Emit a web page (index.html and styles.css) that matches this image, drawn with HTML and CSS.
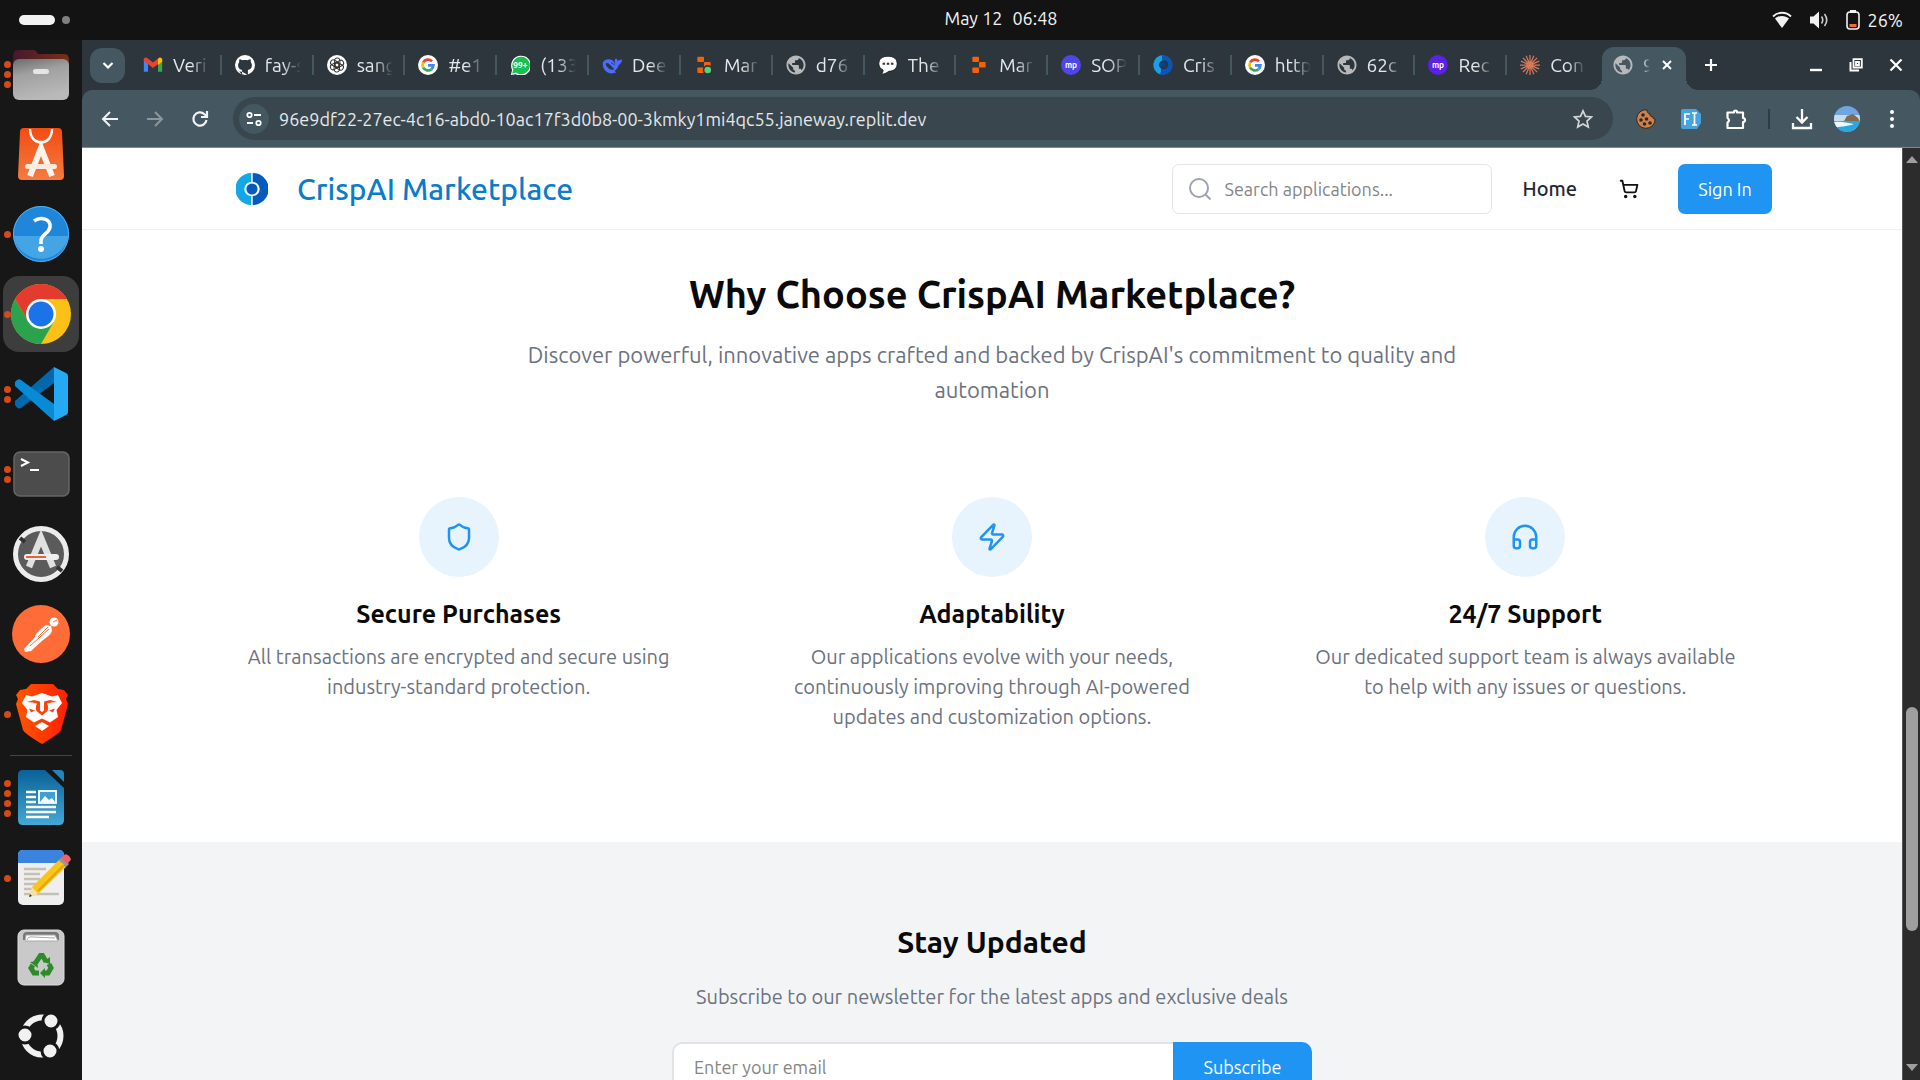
FILE: index.html
```html
<!DOCTYPE html>
<html lang="en">
<head>
<meta charset="utf-8">
<meta name="viewport" content="width=device-width, initial-scale=1">
<title>CrispAI Marketplace</title>
<link rel="stylesheet" href="styles.css">
</head>
<body>
<svg class="sprite" aria-hidden="true">
  <symbol id="google" viewBox="0 0 24 24"><circle cx="12" cy="12" r="12" fill="#fff"/><g fill="none" stroke-width="3.2"><path d="M16.8 7.6A6.6 6.6 0 0 0 6.2 8.8" stroke="#ea4335"/><path d="M6.2 8.8a6.6 6.6 0 0 0 0 6.4" stroke="#fbbc05"/><path d="M6.2 15.2a6.6 6.6 0 0 0 10 1.8" stroke="#34a853"/><path d="M16.2 17a6.6 6.6 0 0 0 2.3-4.6H12" stroke="#4285f4"/></g></symbol>
  <symbol id="globe" viewBox="1.500 1.500 21 21"><path d="M12 2C6.480 2 2 6.480 2 12s4.480 10 10 10 10-4.480 10-10S17.520 2 12 2zm-1 17.930c-3.950-.490-7-3.850-7-7.930 0-.620.080-1.210.210-1.790L9 15v1c0 1.100.900 2 2 2v1.930zm6.900-2.540c-.260-.810-1-1.390-1.900-1.390h-1v-3c0-.550-.450-1-1-1H8v-2h2c.550 0 1-.450 1-1V7h2c1.100 0 2-.900 2-2v-.410c2.930 1.190 5 4.060 5 7.410 0 2.080-.800 3.970-2.100 5.390z" fill="#b6b8ba"/></symbol>
  <symbol id="replit" viewBox="0 0 24 24"><g fill="#f26207"><rect x="4" y="2" width="8" height="6.500" rx="1"/><rect x="12" y="8.500" width="8" height="6.500" rx="1"/><rect x="4" y="15" width="8" height="6.500" rx="1"/></g></symbol>
  <symbol id="crisp" viewBox="0 0 32 32"><path d="M15.300 0A16 16 0 0 0 15.300 32V23A7 7 0 0 1 15.300 9Z" fill="#12a8e6"/><path d="M16.700 0A16 16 0 0 1 16.700 32V23A7 7 0 0 0 16.700 9Z" fill="#055bbd"/><circle cx="16" cy="16" r="5.600" fill="#055bbd"/></symbol>
</svg>

<header class="topbar">
  <button class="workspaces" aria-label="Activities"><span class="pill"></span><span class="dot"></span></button>
  <time class="clock"><span>May 12</span><span>06:48</span></time>
  <button class="status" aria-label="System menu">
    <svg width="20" height="18" viewBox="0 0 20 18"><path d="M1 5.500C6 .5 14 .5 19 5.500" fill="none" stroke="#f2f2f2" stroke-width="1.800"/><path d="M3 7.600C7 4 13 4 17 7.600L10 17Z" fill="#f2f2f2"/></svg>
    <svg width="20" height="20" viewBox="0 0 20 20"><path d="M1 6.500h3.500L10 1.500v17L4.500 13.500H1Z" fill="#f2f2f2"/><path d="M12.500 6.500q2.500 3.500 0 7M15.500 4q4.500 6 0 12" fill="none" stroke="#ccc" stroke-width="1.600"/></svg>
    <span class="battery"><svg width="14" height="20" viewBox="0 0 14 20"><rect x="4" y="0" width="6" height="3" fill="#f2f2f2"/><rect x="1" y="2" width="12" height="17" rx="3" fill="none" stroke="#f2f2f2" stroke-width="1.600"/><rect x="3.500" y="14" width="7" height="3" fill="#f26a3c"/></svg>26%</span>
  </button>
</header>

<div class="desktop">
<nav class="dock" aria-label="Dock">
  <button class="app" aria-label="Files"><span class="running"><i></i><i></i><i></i></span>
    <svg width="60" height="60" viewBox="0 0 60 60"><defs><linearGradient id="fg" x1="0" y1="0" x2=".3" y2="1"><stop offset="0" stop-color="#6b6b6b"/><stop offset=".4" stop-color="#a0a0a0"/><stop offset="1" stop-color="#b9b9b9"/></linearGradient><linearGradient id="fb"><stop offset="0" stop-color="#45182f"/><stop offset="1" stop-color="#7a2f17"/></linearGradient></defs><path d="M2 12q0-6 5-6h15q3 0 5 4h26q5 0 5 6v12H2Z" fill="url(#fb)"/><rect x="2" y="15" width="56" height="41" rx="6" fill="url(#fg)"/><rect x="22" y="25" width="16" height="5" rx="2.500" fill="#e5e5e5"/></svg></button>
  <button class="app" aria-label="App Center">
    <svg width="60" height="60" viewBox="0 0 60 60"><defs><linearGradient id="bag" x2="0" y2="1"><stop offset="0" stop-color="#f24c12"/><stop offset="1" stop-color="#f47c40"/></linearGradient></defs><path d="M13 4h34q4 0 4 4l2 44q0 4-4 4H11q-4 0-4-4L9 8q0-4 4-4Z" fill="url(#bag)"/><path d="M19 5c0 18 22 18 22 0" fill="none" stroke="#fff" stroke-width="2.400"/><path d="M19 52 30 24 41 52" fill="none" stroke="#fff3ec" stroke-width="6"/><rect x="14" y="40" width="32" height="5" rx="2.500" fill="#ffe9dc"/></svg></button>
  <button class="app" aria-label="Help"><span class="running"><i></i></span>
    <svg width="60" height="60" viewBox="0 0 60 60"><circle cx="30" cy="30" r="28" fill="#1f86d9"/><path d="M2.500 32h55a28 28 0 0 1-55 0Z" fill="#43a5e5"/><circle cx="30" cy="30" r="27.500" fill="none" stroke="#4fb0ef"/><path d="M23 17c7-5 17-2 16 6-1 7-9 7-9 14v3" fill="none" stroke="#fff" stroke-width="3.600"/><circle cx="30" cy="45" r="3" fill="#fff"/></svg></button>
  <button class="app active" aria-label="Google Chrome"><span class="running"><i></i></span>
    <svg width="62" height="62" viewBox="0 0 62 62"><circle cx="31" cy="31" r="30" fill="#fbc116"/><path d="M5 16A30 30 0 0 1 57 16H31L18 38.500Z" fill="#e33b2e"/><path d="M5 16 18 38.500 31 46 44 38.500 31 61A30 30 0 0 1 5 16Z" fill="#2ba24c"/><path d="M31 16H57L44 38.500Z" fill="#fbc116"/><circle cx="31" cy="31" r="15" fill="#fff"/><circle cx="31" cy="31" r="12.500" fill="#1a73e8"/></svg></button>
  <button class="app" aria-label="Visual Studio Code"><span class="running"><i></i><i></i></span>
    <svg width="60" height="60" viewBox="0 0 60 60"><path d="M4 37 43 3V19L10 44Q7 46 4 41Z" fill="#0069ac"/><path d="M4 18Q7 14 10 16L43 40V57L4 22Z" fill="#078bd6"/><path d="M43 3 55 9Q57 10 57 12V48Q57 50 55 51L43 57Z" fill="#25a9f2"/></svg></button>
  <button class="app" aria-label="Terminal"><span class="running"><i></i><i></i></span>
    <svg width="60" height="60" viewBox="0 0 60 60"><rect x="3" y="8" width="55" height="44" rx="6" fill="#4c4c4c" stroke="#666" stroke-width="1.500"/><path d="M10 15l7 3.500-7 3.500M19 26h9" fill="none" stroke="#fff" stroke-width="2"/></svg></button>
  <button class="app" aria-label="Software Updater">
    <svg width="60" height="60" viewBox="0 0 60 60"><circle cx="30" cy="30" r="27" fill="#5b5b5b"/><circle cx="30" cy="30" r="25.500" fill="none" stroke="#ececec" stroke-width="5"/><path d="M9 14l5 4M46 43l5 4" stroke="#333" stroke-width="4"/><path d="M18 43 30 14 42 43" fill="none" stroke="#e0e0e0" stroke-width="6.500"/><rect x="13" y="30" width="35" height="6" rx="3" fill="#eee"/><path d="M15 33h20" stroke="#e6643a" stroke-width="2"/></svg></button>
  <button class="app" aria-label="Postman">
    <svg width="60" height="60" viewBox="0 0 60 60"><circle cx="30" cy="30" r="29" fill="#ff6c37"/><circle cx="43" cy="18" r="4.500" fill="#fff"/><path d="M40 22l-5-1c-6 4-11 9-11 12L13 45l1 3 6-1 12-11c5-3 9-7 9-10Z" fill="#fff"/><path d="M19 42l19-17M27 33l10-10M42 18l4-2" stroke="#ff6c37" stroke-width="1"/></svg></button>
  <button class="app" aria-label="Brave"><span class="running"><i></i></span>
    <svg width="60" height="60" viewBox="0 0 60 60"><defs><linearGradient id="br"><stop offset="0" stop-color="#ff5601"/><stop offset="1" stop-color="#ff2000"/></linearGradient></defs><path d="M20 0H42L47 5 53 6 57 11 55 15 57 20 50 46Q48 50 31 60 14 50 12 46L5 20 7 15 5 11 9 6 15 5Z" fill="url(#br)"/><path d="M11 19 15 11 21 12.500 31 9 41 12.500 47 11 51 19 45.500 26 47 33 39 38.500 31 34.500 23 38.500 15 33 16.500 26Z" fill="#fff"/><path d="M16 18q6 0 10 1.500-2 4-.5 7.500L31 31.500 36.500 27q1.500-3.500-.5-7.500 4-1.500 10-1.500l-7-2-6 1.500v9L31 28l-2-1.500v-9L23 16Z" fill="#fb4310"/><path d="M18 24.500l6 2-4 2ZM44 24.500l-6 2 4 2Z" fill="#fb4310"/><path d="M24 42 31 38 38 42 31 47Z" fill="#fff"/></svg></button>
  <hr class="dock-line">
  <button class="app" aria-label="LibreOffice Writer"><span class="running"><i></i><i></i><i></i><i></i></span>
    <svg width="60" height="60" viewBox="0 0 60 60"><defs><linearGradient id="wr" x2="0" y2="1"><stop offset="0" stop-color="#0a6197"/><stop offset="1" stop-color="#43a9d6"/></linearGradient></defs><path d="M12 2H34L53 20V52q0 5-5 5H12q-5 0-5-5V7q0-5 5-5Z" fill="url(#wr)"/><path d="M41 2h8q4 0 4 4v8Z" fill="#2186bd"/><path d="M15 24h10M15 29h10M15 34h10M15 39h30M15 44h30M15 49h23" stroke="#fff" stroke-width="2.400"/><rect x="28" y="23" width="17" height="12" fill="#3f9fd0" stroke="#fff" stroke-width="1.800"/><path d="M29 34l5-6 4 4 3-2 3 4Z" fill="#fff"/></svg></button>
  <button class="app" aria-label="Text Editor"><span class="running"><i></i></span>
    <svg width="60" height="60" viewBox="0 0 60 60"><rect x="7" y="2" width="46" height="55" rx="5" fill="#efefef"/><path d="M7 15V7q0-5 5-5h36q5 0 5 5v8Z" fill="#3a84e0"/><path d="M13 21h22M13 26h16M13 31h16M13 36h16M13 41h12M13 46h35" stroke="#c5c0b4" stroke-width="2.400"/><path d="M18 49l3-10L48 12l7 7-28 27Z" fill="#f9c51b"/><path d="M21 39l6 7-9 3Z" fill="#f7e0a8"/><path d="M18 49l1-3 2 2Z" fill="#333"/><path d="M48 12l3-3 7 7-3 3Z" fill="#999"/><path d="M50 10l3-3q2-2 5 1t1 5l-3 3Z" fill="#f0606a"/><path d="M27 43 53 17" stroke="#e0a40c" stroke-width="2"/></svg></button>
  <button class="app" aria-label="Trash">
    <svg width="60" height="60" viewBox="0 0 60 60"><rect x="7" y="2" width="46" height="55" rx="6" fill="#c9c9c9" stroke="#ddd"/><path d="M12 12V8q0-4 4-4h28q4 0 4 4v4Z" fill="#777"/><path d="M14 13l1-6h29l3 6Z" fill="#fff" stroke="#aaa"/><path d="M16 12q1-4 6-3l22 1" fill="none" stroke="#aaa"/><g fill="none" stroke="#2f8b2a" stroke-width="5"><path d="M24.500 35l5-7.500h2l3.500 6"/><path d="M38 36l2 4-3 5h-5"/><path d="M28 45h-5l-3-5 2-3"/></g><path d="M39 29v7l-7-2ZM34 40v10l-5-5ZM19 34l7-1 1 7Z" fill="#2f8b2a"/></svg></button>
  <button class="app" aria-label="Show Apps">
    <svg width="60" height="60" viewBox="0 0 60 60"><circle cx="31" cy="28" r="18.500" fill="none" stroke="#f1f1f1" stroke-width="6"/><g fill="#f1f1f1" stroke="#171717" stroke-width="3"><circle cx="14" cy="27" r="8"/><circle cx="40" cy="13" r="8"/><circle cx="39" cy="43" r="8"/></g></svg></button>
</nav>

<div class="browser">
  <div class="tabstrip">
    <button class="tab-search" aria-label="Search tabs"><svg width="14" height="14" viewBox="0 0 14 14"><path d="M2.500 5 7 9.500 11.500 5" fill="none" stroke="#fff" stroke-width="2.200"/></svg></button>
    <div class="tabs">
      <button class="tab"><svg viewBox="0 0 24 24"><path d="M1 4.500V20H6V10Z" fill="#4285f4"/><path d="M18 10V20h5V4.500Z" fill="#34a853"/><path d="M1 7V4.500Q3 2 5.500 4L12 9l6.500-5Q21 2.500 23 4.500V7L12 15.500Z" fill="#ea4335"/><path d="M18 4.500 20 3q3 0 3 3v2l-5 4Z" fill="#fbbc04"/></svg><span>Veri</span></button>
      <button class="tab"><svg viewBox="0 0 24 24"><circle cx="12" cy="12" r="12" fill="#fff"/><path d="M8.500 24v-4c-3 .7-4-1-4.600-2M8.500 20v-2c-4-.8-5-3.400-4.700-6.500.1-1.200.6-2.200 1.300-3-.3-1.200-.2-2.400.2-3.500 1.300 0 2.400.6 3.500 1.400 2-.5 4.400-.5 6.400 0 1.100-.8 2.200-1.400 3.500-1.400.4 1.100.5 2.300.2 3.500.7.800 1.200 1.800 1.300 3 .3 3.100-.7 5.700-4.700 6.500v6Z" fill="#2c363c"/></svg><span>fay-s</span></button>
      <button class="tab"><svg viewBox="0 0 24 24"><circle cx="12" cy="12" r="12" fill="#fff"/><g fill="none" stroke="#333" stroke-width="1.200"><rect x="9" y="3.500" width="6.500" height="11" rx="3.200"/><rect x="9" y="3.500" width="6.500" height="11" rx="3.200" transform="rotate(60 12 12)"/><rect x="9" y="3.500" width="6.500" height="11" rx="3.200" transform="rotate(120 12 12)"/><rect x="9" y="3.500" width="6.500" height="11" rx="3.200" transform="rotate(180 12 12)"/><rect x="9" y="3.500" width="6.500" height="11" rx="3.200" transform="rotate(240 12 12)"/><rect x="9" y="3.500" width="6.500" height="11" rx="3.200" transform="rotate(300 12 12)"/></g></svg><span>sang</span></button>
      <button class="tab"><svg><use href="#google"/></svg><span>#e1</span></button>
      <button class="tab"><svg viewBox="0 0 24 24"><path d="M1 24l1.500-6A12 12 0 1 1 7 23Z" fill="#fff"/><path d="M2.500 22.500 4 17.500A10.500 10.500 0 1 1 7 21Z" fill="#16c14d"/><text x="12.500" y="16" text-anchor="middle" class="mini">99+</text></svg><span>(133</span></button>
      <button class="tab"><svg viewBox="0 0 24 24"><path d="M1 9C3 5 8 4 12 6c2 2 3 3 4 5l-1-5 2-2 2 3 5-2c0 4-2 6-4 7-1 4-3 6-5 7l2 2-4 1C6 23 0 17 1 9Z" fill="#4d6bfe"/><path d="M5 10c4 0 6 4 9 7-4 1-9-2-9-7ZM11 9l4 3" fill="#2c363c" stroke="#2c363c"/></svg><span>Dee</span></button>
      <button class="tab"><svg viewBox="0 0 24 24"><use href="#replit"/><circle cx="16.500" cy="18" r="6" fill="#2c363c"/><circle cx="16.500" cy="18" r="4" fill="#58d27a"/></svg><span>Mar</span></button>
      <button class="tab"><svg><use href="#globe"/></svg><span>d76</span></button>
      <button class="tab"><svg viewBox="0 0 24 24"><path d="M12 1.500c7 0 11 3.500 11 9s-4 9-10 9c-3 2.500-6 3.500-9 3.500 2-2 2-3 2-5-3-1.500-5-4-5-7.500 0-5.500 4-9 11-9Z" fill="#fff" stroke="#15191c"/><path d="M5.500 10.500h3M10.500 10.500h3M15.500 10.500h3" stroke="#333" stroke-width="2.400"/></svg><span>The</span></button>
      <button class="tab"><svg><use href="#replit"/></svg><span>Mar</span></button>
      <button class="tab"><svg viewBox="0 0 24 24"><circle cx="12" cy="12" r="12" fill="#4f46e5"/><text x="12" y="15" text-anchor="middle" class="mini">mp</text></svg><span>SOP</span></button>
      <button class="tab"><svg viewBox="0 0 24 24"><path d="M12 0a12 12 0 0 0-3 23.500l1-7a5.500 5.500 0 0 1 1-10Z" fill="#1a9fe8"/><path d="M11 0a12 12 0 1 1-2 23.700l1.500-7A5.500 5.500 0 1 0 11 6.500Z" fill="#0a55b5"/><circle cx="12" cy="12" r="3.500" fill="#0c3f80"/></svg><span>Cris</span></button>
      <button class="tab"><svg><use href="#google"/></svg><span>http</span></button>
      <button class="tab"><svg><use href="#globe"/></svg><span>62c</span></button>
      <button class="tab"><svg viewBox="0 0 24 24"><circle cx="12" cy="12" r="12" fill="#5b21e6"/><text x="12" y="15" text-anchor="middle" class="mini">mp</text></svg><span>Rec</span></button>
      <button class="tab"><svg viewBox="0 0 24 24"><path d="M12 0v24M0 12h24M3.500 3.500l17 17M20.500 3.500l-17 17M7.400 1l9.200 22M16.600 1 7.400 23M1 7.400l22 9.200M1 16.600l22-9.200" stroke="#d97757" stroke-width="1.500"/></svg><span>Con</span></button>
    </div>
    <div class="tab-current"><svg width="20" height="20"><use href="#globe"/></svg><span>9</span><button aria-label="Close tab"><svg width="12" height="12" viewBox="0 0 12 12"><path d="M2 2l8 8M10 2l-8 8" stroke="#fff" stroke-width="2"/></svg></button></div>
    <button class="new-tab" aria-label="New tab"><svg width="14" height="14" viewBox="0 0 14 14"><path d="M7 1v12M1 7h12" stroke="#fff" stroke-width="2.200"/></svg></button>
    <div class="window-buttons">
      <button aria-label="Minimize"><svg width="14" height="14" viewBox="0 0 14 14"><path d="M1 12h12" stroke="#fff" stroke-width="2.400"/></svg></button>
      <button aria-label="Restore"><svg width="14" height="14" viewBox="0 0 14 14"><path d="M4.500 1.200h8.300v8.300H4.500ZM7 4h3v3H7Z" fill="none" stroke="#fff" stroke-width="1.800"/><path d="M1.500 4v8.600H10" fill="none" stroke="#fff" stroke-width="2"/></svg></button>
      <button aria-label="Close"><svg width="14" height="14" viewBox="0 0 14 14"><path d="M1.500 1.500l11 11M12.500 1.500l-11 11" stroke="#fff" stroke-width="2.200"/></svg></button>
    </div>
  </div>

  <div class="toolbar">
    <div class="nav-buttons">
      <button aria-label="Back"><svg width="20" height="20" viewBox="0 0 20 20"><path d="M18 10H3M10 3l-7 7 7 7" fill="none" stroke="#f1f3f4" stroke-width="2"/></svg></button>
      <button aria-label="Forward" disabled><svg width="20" height="20" viewBox="0 0 20 20"><path d="M2 10h15M10 3l7 7-7 7" fill="none" stroke="#8b979d" stroke-width="2"/></svg></button>
      <button aria-label="Reload"><svg width="20" height="20" viewBox="0 0 20 20"><path d="M16.500 11A6.600 6.600 0 1 1 14.500 5.200L17 7.500" fill="none" stroke="#f1f3f4" stroke-width="2.200"/><path d="M17 2v6h-6" fill="none" stroke="#f1f3f4" stroke-width="2.200"/></svg></button>
    </div>
    <div class="omnibox">
      <button class="site-info" aria-label="Site information"><svg width="16" height="16" viewBox="0 0 16 16"><g fill="none" stroke="#fff" stroke-width="1.800"><circle cx="3.500" cy="4" r="2.200"/><path d="M8 4h7M1 12h6"/><circle cx="12.500" cy="12" r="2.200"/></g></svg></button>
      <input type="text" aria-label="Address" value="96e9df22-27ec-4c16-abd0-10ac17f3d0b8-00-3kmky1mi4qc55.janeway.replit.dev">
      <button aria-label="Bookmark this page"><svg width="20" height="20" viewBox="0 0 20 20"><path d="M10 1.800l2.500 5.600 6 .6-4.500 4.100 1.300 6L10 15l-5.300 3.100 1.300-6L1.500 8l6-.6Z" fill="none" stroke="#d0d5d8" stroke-width="1.700"/></svg></button>
    </div>
    <div class="extensions">
      <button aria-label="Cookie editor"><svg width="20" height="20" viewBox="0 0 20 20"><path d="M11 .8A9.300 9.300 0 1 0 19.200 10c-2 0-2.700-1-2.500-2.500-2 .3-3-.8-2.600-2.600C12 5 11 3 11 .8Z" fill="#c68452" stroke="#3c2415"/><g fill="#3c2415"><circle cx="7" cy="6" r="1.800"/><circle cx="5" cy="11" r="1.800"/><circle cx="10.500" cy="10" r="1.800"/><circle cx="8.500" cy="15" r="1.800"/><circle cx="14" cy="14" r="1.800"/></g></svg></button>
      <button aria-label="Font inspector"><svg width="20" height="20" viewBox="0 0 20 20"><path d="M2 0h13l5 5v9l-4 6H2q-2 0-2-2V2q0-2 2-2Z" fill="#45a3e0"/><path d="M4 16V5h5M4 10h4M11 4h5M11 16h5M13.500 4v12" fill="none" stroke="#fff" stroke-width="1.700"/></svg></button>
      <button aria-label="Extensions"><svg width="22" height="22" viewBox="0 0 22 22"><path d="M2.500 4.500H9V4a1.500 1.500 0 0 1 3 0v.5h6V10a1.500 1.500 0 0 1 0 4v6H2.500v-5.500q3-2 0-4.500Z" fill="none" stroke="#fff" stroke-width="2.200" stroke-linejoin="round"/></svg></button>
      <span class="bar"></span>
      <button aria-label="Downloads"><svg width="22" height="22" viewBox="0 0 22 22"><path d="M11 1v13M5.500 9l5.500 5.500L16.500 9M2 15v5h18v-5" fill="none" stroke="#fff" stroke-width="2.300"/></svg></button>
      <button aria-label="Profile"><svg width="26" height="26" viewBox="0 0 26 26"><defs><clipPath id="av"><circle cx="13" cy="13" r="13"/></clipPath></defs><g clip-path="url(#av)"><path d="M0 0h26v26H0Z" fill="#6fa5e2"/><path d="M0 9h26v6H0Z" fill="#c8ddec"/><path d="M10 15l3-5 6-2 5 4 2 4Z" fill="#806a50"/><path d="M0 15h26v11H0Z" fill="#2aa7dd"/><path d="M0 16c8-1 12 1 20 2-8 3-14 2-20 4Z" fill="#eef8fb"/></g></svg></button>
      <button aria-label="Menu"><svg width="20" height="20" viewBox="0 0 20 20"><g fill="#fff"><circle cx="10" cy="3" r="2"/><circle cx="10" cy="10" r="2"/><circle cx="10" cy="17" r="2"/></g></svg></button>
    </div>
  </div>

  <div class="viewport">
    <div class="page">
      <header class="site-header">
        <div class="container header-row">
          <a class="brand" href="#"><svg width="32" height="32"><use href="#crisp"/></svg>CrispAI Marketplace</a>
          <nav class="site-nav">
            <label class="search"><svg width="24" height="24" viewBox="0 0 24 24"><circle cx="11" cy="11" r="9" fill="none" stroke="#9ca3af" stroke-width="2"/><path d="M17.500 17.500 22.500 22.500" stroke="#9ca3af" stroke-width="2"/></svg><input type="search" placeholder="Search applications..." aria-label="Search applications"></label>
            <a class="home" href="#">Home</a>
            <a class="cart" href="#" aria-label="Cart"><svg width="20" height="20" viewBox="0 0 24 24"><g fill="none" stroke="#111" stroke-width="2.200" stroke-linecap="round" stroke-linejoin="round"><circle cx="8" cy="21" r="1"/><circle cx="19" cy="21" r="1"/><path d="M2.050 2.050h2l2.660 12.420a2 2 0 0 0 2 1.580h9.780a2 2 0 0 0 1.950-1.570l1.650-7.430H5.120"/></g></svg></a>
            <button class="primary sign-in">Sign In</button>
          </nav>
        </div>
      </header>

      <section class="why">
        <div class="container">
          <h2>Why Choose CrispAI Marketplace?</h2>
          <p class="lead">Discover powerful, innovative apps crafted and backed by CrispAI's commitment to quality and automation</p>
          <div class="features">
            <article class="feature">
              <span class="badge"><svg viewBox="0 0 24 24"><path d="M20 13c0 5-3.500 7.500-7.660 8.950a1 1 0 0 1-.67-.01C7.500 20.500 4 18 4 13V6a1 1 0 0 1 1-1c2 0 4.500-1.200 6.240-2.720a1.170 1.170 0 0 1 1.520 0C14.510 3.810 17 5 19 5a1 1 0 0 1 1 1z"/></svg></span>
              <h3>Secure Purchases</h3>
              <p>All transactions are encrypted and secure using industry-standard protection.</p>
            </article>
            <article class="feature">
              <span class="badge"><svg viewBox="0 0 24 24"><path d="M4 14a1 1 0 0 1-.78-1.630l9.900-10.200a.5.5 0 0 1 .86.460l-1.920 6.020A1 1 0 0 0 13 10h7a1 1 0 0 1 .78 1.630l-9.900 10.200a.5.5 0 0 1-.86-.460l1.920-6.020A1 1 0 0 0 11 14z"/></svg></span>
              <h3>Adaptability</h3>
              <p>Our applications evolve with your needs, continuously improving through AI-powered updates and customization options.</p>
            </article>
            <article class="feature">
              <span class="badge"><svg viewBox="0 0 24 24"><path d="M3 14h3a2 2 0 0 1 2 2v3a2 2 0 0 1-2 2H5a2 2 0 0 1-2-2v-7a9 9 0 0 1 18 0v7a2 2 0 0 1-2 2h-1a2 2 0 0 1-2-2v-3a2 2 0 0 1 2-2h3"/></svg></span>
              <h3>24/7 Support</h3>
              <p>Our dedicated support team is always available to help with any issues or questions.</p>
            </article>
          </div>
        </div>
      </section>

      <section class="newsletter">
        <h2>Stay Updated</h2>
        <p>Subscribe to our newsletter for the latest apps and exclusive deals</p>
        <form class="subscribe">
          <input type="email" placeholder="Enter your email" aria-label="Email">
          <button type="button" class="primary">Subscribe</button>
        </form>
      </section>
    </div>
    <div class="scrollbar" aria-hidden="true">
      <svg width="12" height="7" viewBox="0 0 12 7"><path d="M0 7 6 0l6 7Z" fill="#9f9f9f"/></svg>
      <span class="before"></span><span class="thumb"></span><span class="after"></span>
      <svg width="12" height="7" viewBox="0 0 12 7"><path d="M0 0h12L6 7Z" fill="#9f9f9f"/></svg>
    </div>
  </div>
</div>
</div>
</body>
</html>
```
FILE: styles.css
```css
* { box-sizing: border-box; }

body {
  margin: 0;
  height: 100vh;
  display: flex;
  flex-direction: column;
  overflow: hidden;
  background: #171717;
  font-family: Ubuntu, Roboto, "Noto Sans", sans-serif;
}

button {
  display: flex;
  align-items: center;
  justify-content: center;
  padding: 0;
  border: 0;
  background: none;
  color: inherit;
  font: inherit;
}

input {
  min-width: 0;
  border: 0;
  padding: 0;
  outline: 0;
  background: none;
  font: inherit;
}

a { color: inherit; text-decoration: none; }
h2, h3, p { margin: 0; }
h2, h3 { font-weight: 600; }
svg { flex: none; }
.sprite { position: absolute; width: 0; height: 0; }

/* Desktop top bar */
.topbar {
  flex: none;
  height: 40px;
  padding: 0 17px 0 19px;
  display: grid;
  grid-template-columns: 80px 1fr auto 1fr;
  align-items: center;
  background: #131313;
  color: #f2f2f2;
  font-size: 18px;
}
.workspaces { gap: 7px; justify-content: flex-start; }
.pill { width: 36px; height: 10px; border-radius: 5px; background: #f2f2f2; }
.dot { width: 8px; height: 8px; border-radius: 50%; background: #808080; }
.clock { grid-column: 3; display: flex; gap: 10px; line-height: 36px; padding-bottom: 4px; }
.status { justify-self: end; gap: 17px; }
.battery { display: flex; align-items: center; gap: 8px; }

.desktop { flex: 1; min-height: 0; display: flex; }

/* Dock */
.dock {
  flex: none;
  width: 82px;
  padding: 0 7px;
  display: flex;
  flex-direction: column;
  align-items: center;
  gap: 12px;
  background: #171717;
}
.app {
  position: relative;
  flex: none;
  width: 68px;
  height: 68px;
  border-radius: 12px;
}
.app.active { background: #3d3d3d; box-shadow: 0 0 0 4px #3d3d3d; }
.running {
  position: absolute;
  left: -3px;
  top: 0;
  height: 100%;
  display: flex;
  flex-direction: column;
  justify-content: center;
  gap: 3px;
}
.running i { width: 7px; height: 7px; border-radius: 50%; background: #d64a18; }
.dock-line { width: 62px; height: 1px; margin: -5px 0 -4px; border: 0; background: #444; }

/* Browser window */
.browser { flex: 1; min-width: 0; display: flex; flex-direction: column; background: #2c363c; }

.tabstrip {
  flex: none;
  height: 50px;
  padding: 0 8px;
  display: flex;
  align-items: center;
  color: #e3e8ea;
  font-size: 19px;
}
.tab-search { width: 35px; height: 35px; margin-right: 5px; border-radius: 12px; background: #455760; }
.tabs { flex: 1; min-width: 0; display: flex; }
.tab {
  flex: 1;
  min-width: 0;
  height: 20px;
  padding-left: 13px;
  justify-content: flex-start;
  gap: 10px;
  border-right: 2px solid #455760;
}
.tab:last-child { border-color: transparent; }
.tab svg { width: 20px; height: 20px; }
.tab span {
  width: 36px;
  overflow: hidden;
  text-align: left;
  line-height: 26px;
  white-space: nowrap;
  mask-image: linear-gradient(90deg, #000 50%, transparent);
}
.mini { font-size: 10px; font-weight: 700; fill: #fff; }
.tab-current {
  position: relative;
  align-self: flex-end;
  width: 84px;
  height: 43px;
  margin: 0 4px 0 3px;
  padding: 0 13px 7px 11px;
  display: flex;
  align-items: center;
  border-radius: 12px 12px 0 0;
  background: #455760;
}
.tab-current::before,
.tab-current::after {
  content: "";
  position: absolute;
  bottom: 0;
  width: 12px;
  height: 12px;
}
.tab-current::before { right: 100%; background: radial-gradient(circle at 0 0, transparent 12px, #455760 12px); }
.tab-current::after { left: 100%; background: radial-gradient(circle at 100% 0, transparent 12px, #455760 12px); }
.tab-current span {
  width: 7px;
  margin: 0 auto 0 10px;
  overflow: hidden;
  mask-image: linear-gradient(90deg, #000, transparent);
}
.new-tab { width: 32px; height: 32px; margin-left: 5px; }
.window-buttons { display: flex; gap: 8px; margin-left: 73px; }
.window-buttons button { width: 32px; height: 32px; }

.toolbar {
  flex: none;
  height: 58px;
  padding: 0 12px;
  display: flex;
  align-items: center;
  border-bottom: 1px solid #7d8a91;
  border-radius: 10px 10px 0 0;
  background: #455760;
}
.nav-buttons { display: flex; gap: 13px; margin-right: 17px; }
.nav-buttons button { width: 32px; height: 32px; }
.omnibox {
  flex: 1;
  height: 43px;
  padding: 0 20px 0 6px;
  display: flex;
  align-items: center;
  gap: 10px;
  border-radius: 22px;
  background: #39464d;
}
.omnibox input { flex: 1; color: #e3e8ea; font-size: 18px; line-height: 24px; }
.site-info { width: 30px; height: 30px; border-radius: 50%; background: #455760; }
.extensions { display: flex; align-items: center; margin-left: 17px; gap: 13px; }
.extensions button { width: 32px; height: 32px; }
.bar { width: 2px; height: 20px; margin: 0 3px; background: #2f3c43; }

.viewport { flex: 1; min-height: 0; display: flex; background: #fff; }
.page { flex: 1; min-width: 0; overflow: hidden; color: #0a0a0a; }

.scrollbar {
  flex: none;
  width: 18px;
  padding: 8px 0 9px;
  display: flex;
  flex-direction: column;
  align-items: center;
  border-left: 1px solid #555;
  background: #2c2c2c;
}
.before { flex: 544; }
.thumb { flex: 224; width: 12px; border-radius: 6px; background: #9f9f9f; }
.after { flex: 133; }

/* Marketplace page */
.container { max-width: 1600px; margin: 0 auto; padding: 0 20px; }
.site-header { border-bottom: 1px solid #f0f1f3; }
.header-row { height: 81px; display: flex; align-items: center; justify-content: space-between; }
.brand {
  display: flex;
  align-items: center;
  gap: 29px;
  padding-left: 24px;
  color: #0a7cca;
  font-size: 30px;
  font-weight: 500;
}
.site-nav { display: flex; align-items: center; }
.search {
  width: 320px;
  height: 50px;
  padding: 0 15px;
  display: flex;
  align-items: center;
  gap: 12px;
  border: 1px solid #e3e5e8;
  border-radius: 7px;
}
.search input { flex: 1; font-size: 18px; }
input::placeholder { color: #858585; opacity: 1; }
.home { margin-left: 30px; color: #1f2937; font-size: 20px; font-weight: 500; }
.cart { display: flex; margin: 0 39px 0 42px; }
.primary { background: #2094f3; color: #fff; font-size: 18px; }
.sign-in { width: 94px; height: 50px; border-radius: 7px; }

.why { padding: 41px 0 110px; text-align: center; }
.why h2 { font-size: 38px; line-height: 46px; }
.lead {
  max-width: 960px;
  margin: 20px auto 90px;
  color: #6b7280;
  font-size: 22px;
  line-height: 35px;
}
.features { display: grid; grid-template-columns: repeat(3, 1fr); gap: 40px; }
.feature { padding: 0 30px; }
.badge {
  width: 80px;
  height: 80px;
  margin: 0 auto 20px;
  display: flex;
  align-items: center;
  justify-content: center;
  border-radius: 50%;
  background: #e7f3fd;
}
.badge svg {
  width: 30px;
  height: 30px;
  fill: none;
  stroke: #2094f3;
  stroke-width: 2;
  stroke-linecap: round;
  stroke-linejoin: round;
}
.feature h3 { margin-bottom: 10px; font-size: 25px; line-height: 35px; }
.feature p { color: #6b7280; font-size: 20px; line-height: 30px; }

.newsletter { padding: 80px 20px; background: #f3f4f6; text-align: center; }
.newsletter h2 { font-size: 30px; line-height: 40px; }
.newsletter p { margin: 20px 0 30px; color: #6b7280; font-size: 20px; line-height: 30px; }
.subscribe { max-width: 640px; height: 50px; margin: 0 auto; display: flex; }
.subscribe input {
  flex: 1;
  padding: 0 20px;
  border: 2px solid #e1e3e8;
  border-right: 0;
  border-radius: 10px 0 0 10px;
  background: #fff;
  font-size: 18px;
}
.subscribe button { width: 139px; border-radius: 0 10px 10px 0; }
```
